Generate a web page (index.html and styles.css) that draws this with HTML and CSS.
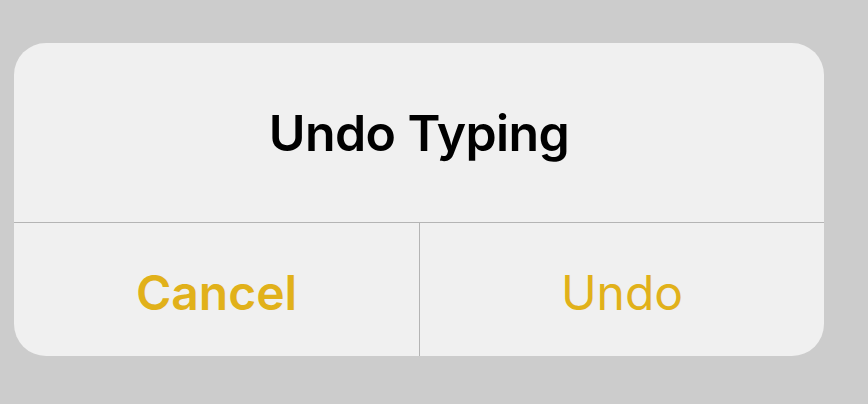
FILE: index.html
```html
<!DOCTYPE html>
<html>
<head>
<meta charset="utf-8">
<link rel="stylesheet" href="styles.css">
</head>
<body>
<div class="dialog">
  <div class="title">Undo Typing</div>
  <div class="actions">
    <div class="btn cancel">Cancel</div>
    <div class="btn undo">Undo</div>
  </div>
</div>
</body>
</html>
```
FILE: styles.css
```css
html, body {
  margin: 0;
  padding: 0;
  background: #cccccc;
  width: 868px;
  height: 404px;
  overflow: hidden;
}
body {
  padding: 43px 0 0 14px;
  box-sizing: border-box;
  font-family: Inter, "Liberation Sans", sans-serif;
}
.dialog {
  width: 810px;
  height: 313px;
  background: #f0f0f0;
  border-radius: 32px;
  display: flex;
  flex-direction: column;
  overflow: hidden;
}
.title {
  height: 179px;
  display: flex;
  align-items: center;
  justify-content: center;
  font-size: 50px;
  font-weight: 600;
  letter-spacing: -0.6px;
  color: #000;
  border-bottom: 1px solid #b4b4b4;
}
.actions {
  flex: 1;
  display: grid;
  grid-template-columns: 406px 1fr;
}
.btn {
  display: flex;
  align-items: center;
  justify-content: center;
  font-size: 48px;
  color: #e1b11a;
  padding-top: 5px;
}
.cancel {
  font-weight: 600;
  border-right: 1px solid #b4b4b4;
}
.undo {
  font-weight: 400;
}
```
